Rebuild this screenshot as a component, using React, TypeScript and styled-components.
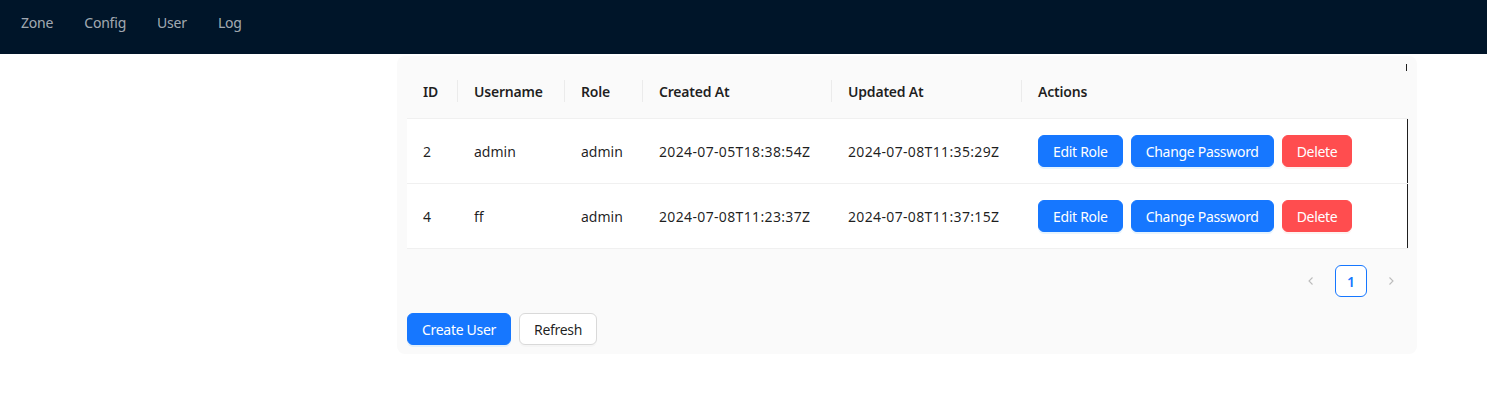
import React from 'react';
import styled, { createGlobalStyle } from 'styled-components';

const GlobalStyle = createGlobalStyle`
  body {
    margin: 0;
    background: #ffffff;
    font-family: "Segoe UI", "Noto Sans", "Liberation Sans", sans-serif;
    font-size: 14px;
    color: rgba(0, 0, 0, 0.88);
  }
`;

type User = {
  id: number;
  username: string;
  role: string;
  createdAt: string;
  updatedAt: string;
};

const users: User[] = [
  { id: 2, username: 'admin', role: 'admin', createdAt: '2024-07-05T18:38:54Z', updatedAt: '2024-07-08T11:35:29Z' },
  { id: 4, username: 'ff', role: 'admin', createdAt: '2024-07-08T11:23:37Z', updatedAt: '2024-07-08T11:37:15Z' },
];

const columns = [
  { title: 'ID', width: 51 },
  { title: 'Username', width: 107 },
  { title: 'Role', width: 78 },
  { title: 'Created At', width: 189 },
  { title: 'Updated At', width: 190 },
  { title: 'Actions', width: 385 },
];

const ChevronLeft = () => (
  <svg width="12" height="12" viewBox="0 0 12 12" fill="none">
    <path d="M7.5 2.5L4 6l3.5 3.5" stroke="currentColor" strokeWidth="1.1" />
  </svg>
);

const ChevronRight = () => (
  <svg width="12" height="12" viewBox="0 0 12 12" fill="none">
    <path d="M4.5 2.5L8 6 4.5 9.5" stroke="currentColor" strokeWidth="1.1" />
  </svg>
);

const App: React.FC = () => (
  <>
    <GlobalStyle />
    <Header>
      <Nav>
        <NavItem>Zone</NavItem>
        <NavItem>Config</NavItem>
        <NavItem>User</NavItem>
        <NavItem>Log</NavItem>
      </Nav>
    </Header>

    <Content>
      <Panel>
        <Table>
          <colgroup>
            {columns.map((c) => (
              <col key={c.title} style={{ width: c.width }} />
            ))}
          </colgroup>
          <thead>
            <tr>
              {columns.map((c, i) => (
                <Th key={c.title} $last={i === columns.length - 1}>
                  {c.title}
                </Th>
              ))}
            </tr>
          </thead>
          <tbody>
            {users.map((u) => (
              <tr key={u.id}>
                <Td>{u.id}</Td>
                <Td>{u.username}</Td>
                <Td>{u.role}</Td>
                <DateCell>{u.createdAt}</DateCell>
                <DateCell>{u.updatedAt}</DateCell>
                <ActionCell>
                  <Actions>
                    <Button $variant="primary">Edit Role</Button>
                    <Button $variant="primary">Change Password</Button>
                    <Button $variant="danger">Delete</Button>
                  </Actions>
                </ActionCell>
              </tr>
            ))}
          </tbody>
        </Table>

        <Pagination>
          <PageArrow>
            <ChevronLeft />
          </PageArrow>
          <PageItem $active>1</PageItem>
          <PageArrow>
            <ChevronRight />
          </PageArrow>
        </Pagination>

        <Toolbar>
          <Button $variant="primary">Create User</Button>
          <Button $variant="default">Refresh</Button>
        </Toolbar>
      </Panel>
    </Content>
  </>
);

export default App;

// Styled Components
const Header = styled.header`
  height: 54px;
  background: #001529;
`;

const Nav = styled.nav`
  display: flex;
  gap: 31px;
  padding-left: 21px;
  height: 45px;
  align-items: center;
  letter-spacing: -0.2px;
`;

const NavItem = styled.span`
  color: rgba(255, 255, 255, 0.65);
  font-size: 14px;
`;

const Content = styled.main`
  padding: 2px 0 0 397px;
`;

const Panel = styled.section`
  width: 1000px;
  background: #fafafa;
  border-radius: 8px;
  padding: 8px 10px 9px;
`;

const Table = styled.table`
  width: 1000px;
  border-collapse: collapse;
  table-layout: fixed;
`;

const Th = styled.th<{ $last?: boolean }>`
  position: relative;
  height: 54px;
  padding: 0 16px;
  text-align: left;
  font-weight: 600;
  letter-spacing: -0.2px;
  color: rgba(0, 0, 0, 0.88);
  background: #fafafa;
  border-bottom: 1px solid #f0f0f0;

  &::before {
    content: '';
    display: ${(p) => (p.$last ? 'none' : 'block')};
    position: absolute;
    right: 0;
    top: 50%;
    width: 1px;
    height: 22px;
    transform: translateY(-50%);
    background: rgba(0, 0, 0, 0.06);
  }

  &::after {
    content: '';
    display: ${(p) => (p.$last ? 'block' : 'none')};
    position: absolute;
    right: 0;
    top: 0;
    width: 1px;
    height: 7px;
    background: #1f1f1f;
  }
`;

const Td = styled.td`
  height: 64px;
  padding: 0 16px;
  background: #ffffff;
  border-bottom: 1px solid #f0f0f0;
  color: rgba(0, 0, 0, 0.88);
`;

const DateCell = styled(Td)`
  letter-spacing: 0.35px;
`;

const ActionCell = styled(Td)`
  border-right: 1px solid #1f1f1f;
`;

const Actions = styled.div`
  display: flex;
  gap: 8px;
`;

const Button = styled.button<{ $variant: 'primary' | 'danger' | 'default' }>`
  height: 32px;
  padding: 0 14px;
  border-radius: 6px;
  font-family: inherit;
  font-size: 14px;
  letter-spacing: -0.3px;
  cursor: pointer;
  border: 1px solid
    ${(p) => (p.$variant === 'primary' ? '#1677ff' : p.$variant === 'danger' ? '#ff4d4f' : '#d9d9d9')};
  background: ${(p) => (p.$variant === 'primary' ? '#1677ff' : p.$variant === 'danger' ? '#ff4d4f' : '#ffffff')};
  color: ${(p) => (p.$variant === 'default' ? 'rgba(0, 0, 0, 0.88)' : '#ffffff')};
  box-shadow: ${(p) =>
    p.$variant === 'primary'
      ? '0 2px 0 rgba(5, 145, 255, 0.1)'
      : p.$variant === 'danger'
      ? '0 2px 0 rgba(255, 38, 5, 0.06)'
      : '0 2px 0 rgba(0, 0, 0, 0.02)'};
`;

const Pagination = styled.div`
  display: flex;
  justify-content: flex-end;
  gap: 8px;
  margin: 16px 0;
`;

const PageArrow = styled.span`
  width: 32px;
  height: 32px;
  display: flex;
  align-items: center;
  justify-content: center;
  color: rgba(0, 0, 0, 0.25);
`;

const PageItem = styled.span<{ $active?: boolean }>`
  box-sizing: border-box;
  width: 32px;
  height: 32px;
  display: flex;
  align-items: center;
  justify-content: center;
  border-radius: 6px;
  background: #ffffff;
  border: 1px solid ${(p) => (p.$active ? '#1677ff' : 'transparent')};
  color: ${(p) => (p.$active ? '#1677ff' : 'rgba(0, 0, 0, 0.88)')};
  font-weight: ${(p) => (p.$active ? 600 : 400)};
`;

const Toolbar = styled.div`
  display: flex;
  gap: 8px;
`;
